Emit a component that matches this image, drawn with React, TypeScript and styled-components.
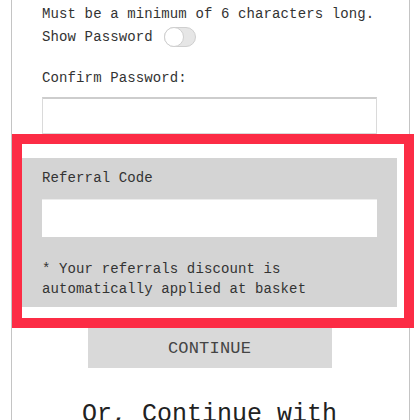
import React from "react";
import styled, { createGlobalStyle } from "styled-components";

const Global = createGlobalStyle`
  html, body { margin: 0; padding: 0; background: #fff; }
  body { font-family: "Liberation Mono", "DejaVu Sans Mono", monospace; color: #333; overflow: hidden; }
`;

const Card = styled.div`
  margin-left: 11px;
  min-height: 420px;
  border-left: 1px solid #c4c4c4;
  border-right: 1px solid #c4c4c4;
  padding: 4px 32px 0 30px;
  box-sizing: content-box;
  width: 335px;
`;

const Text = styled.div<{ $mt?: number }>`
  font-size: 14px;
  letter-spacing: 0.12px;
  line-height: 20px;
  margin-top: ${(p) => p.$mt ?? 0}px;
  white-space: nowrap;
`;

const Row = styled.div`
  display: flex;
  align-items: center;
  height: 20px;
  margin-top: 3px;
  font-size: 14px;
  letter-spacing: 0.12px;
  gap: 11px;
`;

const Track = styled.div`
  width: 32px;
  height: 20px;
  box-sizing: border-box;
  border: 1px solid #cfcfcf;
  border-radius: 10px;
  background: #e6e6e6;
  position: relative;
`;

const Knob = styled.div`
  position: absolute;
  left: -1px;
  top: -1px;
  width: 20px;
  height: 20px;
  box-sizing: border-box;
  border-radius: 50%;
  border: 1px solid #cfcfcf;
  background: #fff;
`;

const Input = styled.div<{ $h: number; $mt: number }>`
  margin-top: ${(p) => p.$mt}px;
  height: ${(p) => p.$h}px;
  width: 335px;
  box-sizing: border-box;
  background: #fff;
  border: 1px solid #dadada;
  border-top: 2px solid #cdcdcd;
`;

const Highlight = styled.div`
  margin: 0 -37px 0 -30px;
  border: 10px solid #fc2c45;
  padding: 14px 7px 11px 0;
  position: relative;
  z-index: 1;
`;

const Referral = styled.div`
  background: #d4d4d4;
  padding: 10px 20px 8px 20px;
`;

const RefInput = styled.div`
  margin-top: 11px;
  height: 38px;
  width: 335px;
  background: #fff;
  border-top: 1px solid #ececec;
  box-sizing: border-box;
`;

const Button = styled.div`
  margin: 0 auto;
  width: 244px;
  height: 40px;
  background: #d9d9d9;
  display: flex;
  align-items: center;
  justify-content: center;
  font-size: 17px;
  color: #444;
  letter-spacing: 0.2px;
`;

const Heading = styled.div`
  margin-top: 32px;
  text-align: center;
  font-size: 25px;
  line-height: 30px;
  color: #222;
  white-space: nowrap;
`;

export default function App() {
  return (
    <>
      <Global />
      <Card>
        <Text>Must be a minimum of 6 characters long.</Text>
        <Row>
          <span>Show Password</span>
          <Track>
            <Knob />
          </Track>
        </Row>
        <Text $mt={21}>Confirm Password:</Text>
        <Input $mt={9} $h={37} />
        <Highlight>
          <Referral>
            <Text>Referral Code</Text>
            <RefInput />
            <Text $mt={22}>* Your referrals discount is</Text>
            <Text>automatically applied at basket</Text>
          </Referral>
        </Highlight>
        <Button>CONTINUE</Button>
        <Heading>Or, Continue with</Heading>
      </Card>
    </>
  );
}
